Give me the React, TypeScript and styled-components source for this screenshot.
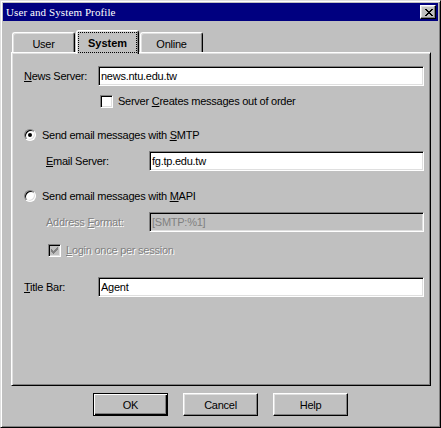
import React from "react";
import styled, { createGlobalStyle, css } from "styled-components";

const GlobalStyle = createGlobalStyle`
  html, body { margin: 0; padding: 0; background: #c0c0c0; }
  body { font-family: "Liberation Sans", Arial, sans-serif; font-size: 11px; }
  * { box-sizing: border-box; }
`;

const Window = styled.div`
  width: 441px;
  height: 428px;
  border: 1px solid;
  border-color: #dfdfdf #000 #000 #dfdfdf;
  box-shadow: inset 1px 1px #fff, inset -1px -1px #808080;
  padding: 2px;
  background: #c0c0c0;
  display: flex;
  flex-direction: column;
  color: #000;
  font-family: "Liberation Sans", Arial, sans-serif;
  font-size: 11px;
  letter-spacing: -0.25px;
`;

const TitleBar = styled.div`
  height: 18px;
  flex-shrink: 0;
  background: #000080;
  display: flex;
  align-items: center;
  justify-content: space-between;
  padding: 0 2px 0 3px;
`;

const TitleText = styled.span`
  color: #fff;
  font-family: "Liberation Serif", "Times New Roman", serif;
  font-size: 11px;
  letter-spacing: 0.1px;
  white-space: nowrap;
`;

const CloseButton = styled.div`
  width: 16px;
  height: 14px;
  background: #c0c0c0;
  border: 1px solid;
  border-color: #fff #000 #000 #fff;
  box-shadow: inset -1px -1px #808080, inset 1px 1px #dfdfdf;
  display: flex;
  align-items: center;
  justify-content: center;
  padding-left: 1px;
`;

const Body = styled.div`
  flex: 1;
  display: flex;
  flex-direction: column;
  padding: 9px 7px 9px 8px;
`;

const TabStrip = styled.div`
  height: 22px;
  flex-shrink: 0;
  display: flex;
  align-items: flex-end;
  gap: 1px;
  padding-left: 1px;
  position: relative;
  z-index: 1;
`;

const Tab = styled.div<{ $active?: boolean }>`
  width: 63px;
  background: #c0c0c0;
  border-top: 1px solid #fff;
  border-left: 1px solid #fff;
  border-right: 1px solid #000;
  border-radius: 3px 3px 0 0;
  box-shadow: inset 1px 1px #dfdfdf, inset -1px 0 #808080;
  display: flex;
  align-items: stretch;
  ${(p) =>
    p.$active
      ? css`
          height: 24px;
          margin-bottom: -2px;
          padding: 1px 1px 1px 1px;
          font-weight: bold;
          letter-spacing: 0;
        `
      : css`
          height: 20px;
          padding-top: 2px;
          justify-content: center;
          align-items: center;
        `}
`;

const FocusLabel = styled.span`
  flex: 1;
  border: 1px dotted #000;
  display: flex;
  align-items: center;
  justify-content: center;
`;

const Panel = styled.div`
  flex: 1;
  border: 1px solid;
  border-color: #fff #000 #000 #fff;
  box-shadow: inset 1px 1px #dfdfdf, inset -1px -1px #808080;
  padding: 13px 6px 0 12px;
  display: flex;
  flex-direction: column;
`;

const Row = styled.div<{ $top?: number; $indent?: number; $gap?: number; $h: number }>`
  display: flex;
  align-items: center;
  height: ${(p) => p.$h}px;
  margin-top: ${(p) => p.$top ?? 0}px;
  padding-left: ${(p) => p.$indent ?? 0}px;
  gap: ${(p) => p.$gap ?? 0}px;
`;

const Label = styled.span<{ $width?: number; $disabled?: boolean }>`
  flex-shrink: 0;
  white-space: nowrap;
  line-height: 13px;
  ${(p) => (p.$width ? `width: ${p.$width}px;` : "")}
  ${(p) =>
    p.$disabled
      ? css`
          color: #808080;
          text-shadow: 1px 1px 0 #fff;
        `
      : ""}
`;

const Key = styled.span`
  text-decoration: underline;
  text-underline-offset: 1px;
`;

const TextBox = styled.input<{ $disabled?: boolean }>`
  flex: 1;
  min-width: 0;
  height: 20px;
  border: 1px solid;
  border-color: #808080 #fff #fff #808080;
  box-shadow: inset 1px 1px #000, inset -1px -1px #dfdfdf;
  padding: 0 2px;
  margin: 0;
  font: inherit;
  letter-spacing: inherit;
  outline: none;
  background: ${(p) => (p.$disabled ? "#c0c0c0" : "#fff")};
  color: ${(p) => (p.$disabled ? "#808080" : "#000")};
`;

const CheckBox = styled.span<{ $disabled?: boolean }>`
  width: 13px;
  height: 13px;
  flex-shrink: 0;
  border: 1px solid;
  border-color: #808080 #fff #fff #808080;
  box-shadow: inset 1px 1px #000, inset -1px -1px #dfdfdf;
  background: ${(p) => (p.$disabled ? "#c0c0c0" : "#fff")};
  display: flex;
  align-items: center;
  justify-content: center;
`;

const Radio = styled.span<{ $checked?: boolean }>`
  width: 12px;
  height: 12px;
  flex-shrink: 0;
  border-radius: 50%;
  border: 1px solid;
  border-color: #808080 #fff #fff #808080;
  box-shadow: inset 1px 1px #000, inset -1px -1px #dfdfdf;
  background: #fff;
  display: flex;
  align-items: center;
  justify-content: center;
  &::after {
    content: "";
    width: 4px;
    height: 4px;
    border-radius: 50%;
    background: ${(p) => (p.$checked ? "#000" : "transparent")};
  }
`;

const ButtonRow = styled.div`
  display: flex;
  justify-content: center;
  gap: 15px;
  margin-top: 7px;
  padding-right: 1px;
`;

const Button = styled.div<{ $default?: boolean }>`
  width: 75px;
  height: 23px;
  background: #c0c0c0;
  display: flex;
  align-items: center;
  justify-content: center;
  border: 1px solid;
  ${(p) =>
    p.$default
      ? css`
          border-color: #000;
          box-shadow: inset 1px 1px #fff, inset -1px -1px #000, inset -2px -2px #808080;
        `
      : css`
          border-color: #fff #000 #000 #fff;
          box-shadow: inset -1px -1px #808080, inset 1px 1px #dfdfdf;
        `}
`;

const CloseGlyph = () => (
  <svg width="8" height="7" viewBox="0 0 8 7" shapeRendering="crispEdges">
    <path
      fill="#000"
      d="M0 0h2v1h-2z M6 0h2v1h-2z M1 1h2v1h-2z M5 1h2v1h-2z M2 2h4v1h-4z M3 3h2v1h-2z M2 4h4v1h-4z M1 5h2v1h-2z M5 5h2v1h-2z M0 6h2v1h-2z M6 6h2v1h-2z"
    />
  </svg>
);

const CheckGlyph = ({ color }: { color: string }) => (
  <svg width="7" height="7" viewBox="0 0 7 7" shapeRendering="crispEdges">
    <path
      fill={color}
      d="M6 0h1v1h-1z M5 1h2v1h-2z M0 2h1v1h-1z M4 2h3v1h-3z M0 3h2v1h-2z M3 3h3v1h-3z M0 4h5v1h-5z M1 5h3v1h-3z M2 6h1v1h-1z"
    />
  </svg>
);

export default function App() {
  return (
    <>
      <GlobalStyle />
      <Window>
        <TitleBar>
          <TitleText>User and System Profile</TitleText>
          <CloseButton>
            <CloseGlyph />
          </CloseButton>
        </TitleBar>
        <Body>
          <TabStrip>
            <Tab>User</Tab>
            <Tab $active>
              <FocusLabel>System</FocusLabel>
            </Tab>
            <Tab>Online</Tab>
          </TabStrip>
          <Panel>
            <Row $h={20}>
              <Label $width={74}>
                <Key>N</Key>ews Server:
              </Label>
              <TextBox readOnly value="news.ntu.edu.tw" />
            </Row>
            <Row $h={13} $top={9} $indent={76} $gap={5}>
              <CheckBox />
              <Label>
                Server <Key>C</Key>reates messages out of order
              </Label>
            </Row>
            <Row $h={12} $top={21} $gap={6}>
              <Radio $checked />
              <Label>
                Send email messages with <Key>S</Key>MTP
              </Label>
            </Row>
            <Row $h={20} $top={10} $indent={22}>
              <Label $width={103}>
                <Key>E</Key>mail Server:
              </Label>
              <TextBox readOnly value="fg.tp.edu.tw" />
            </Row>
            <Row $h={12} $top={19} $gap={6}>
              <Radio />
              <Label>
                Send email messages with <Key>M</Key>API
              </Label>
            </Row>
            <Row $h={20} $top={10} $indent={22}>
              <Label $width={103} $disabled>
                Address <Key>F</Key>ormat:
              </Label>
              <TextBox readOnly $disabled value="[SMTP:%1]" />
            </Row>
            <Row $h={13} $top={12} $indent={24} $gap={5}>
              <CheckBox $disabled>
                <CheckGlyph color="#808080" />
              </CheckBox>
              <Label $disabled>
                <Key>L</Key>ogin once per session
              </Label>
            </Row>
            <Row $h={20} $top={20}>
              <Label $width={74}>
                <Key>T</Key>itle Bar:
              </Label>
              <TextBox readOnly value="Agent" />
            </Row>
          </Panel>
          <ButtonRow>
            <Button $default>OK</Button>
            <Button>Cancel</Button>
            <Button>Help</Button>
          </ButtonRow>
        </Body>
      </Window>
    </>
  );
}
